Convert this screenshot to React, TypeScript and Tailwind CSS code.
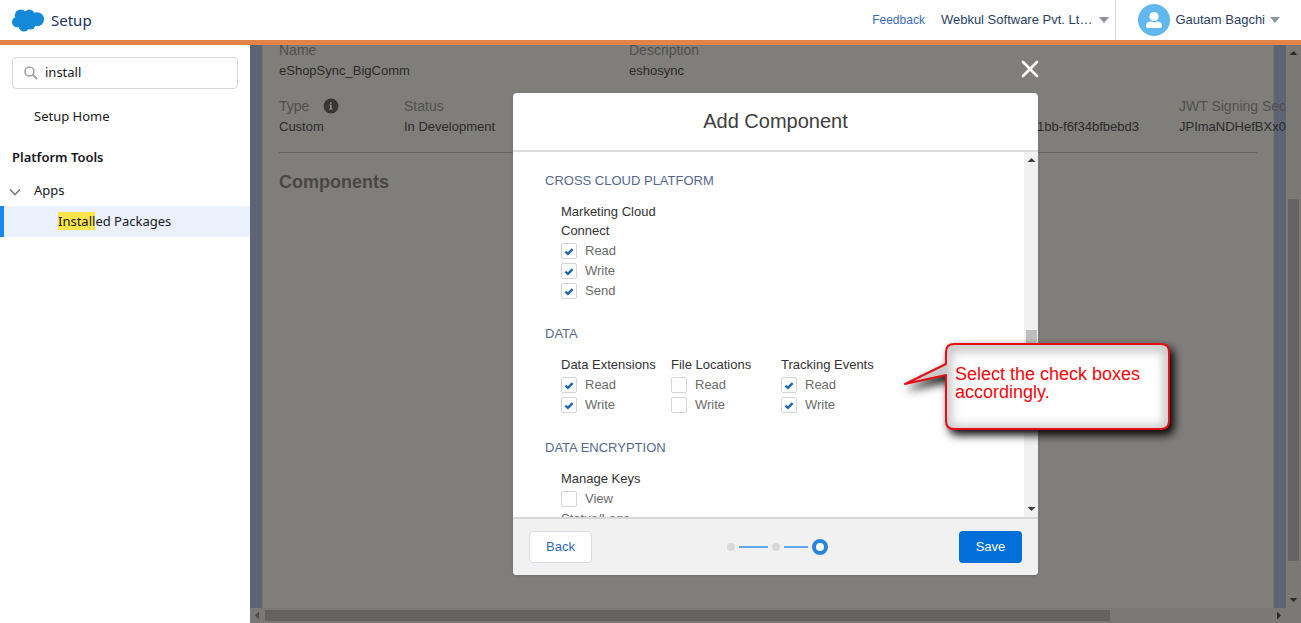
import React, { useState } from "react";

type Option = { label: string; checked: boolean };
type Group = { name: string; options: Option[] };
type Section = { title: string; groups: Group[] };

const sections: Section[] = [
  {
    title: "CROSS CLOUD PLATFORM",
    groups: [
      {
        name: "Marketing Cloud Connect",
        options: [
          { label: "Read", checked: true },
          { label: "Write", checked: true },
          { label: "Send", checked: true },
        ],
      },
    ],
  },
  {
    title: "DATA",
    groups: [
      {
        name: "Data Extensions",
        options: [
          { label: "Read", checked: true },
          { label: "Write", checked: true },
        ],
      },
      {
        name: "File Locations",
        options: [
          { label: "Read", checked: false },
          { label: "Write", checked: false },
        ],
      },
      {
        name: "Tracking Events",
        options: [
          { label: "Read", checked: true },
          { label: "Write", checked: true },
        ],
      },
    ],
  },
  {
    title: "DATA ENCRYPTION",
    groups: [
      {
        name: "Manage Keys",
        options: [{ label: "View Status/Logs", checked: false }],
      },
    ],
  },
];

const CloudLogo = () => (
  <svg width="32" height="24" viewBox="0 0 32 24" fill="#1589d9" aria-hidden="true">
    <circle cx="8.8" cy="7.6" r="6" />
    <circle cx="17.4" cy="6.800" r="5.2" />
    <circle cx="25" cy="11.2" r="7" />
    <circle cx="5.2" cy="14" r="5.2" />
    <circle cx="12" cy="18.2" r="5.4" />
    <circle cx="18.4" cy="16.6" r="5" />
    <path d="M8 6h12l6 6-6 6H8l-3-5z" />
  </svg>
);

const Caret = () => (
  <svg width="10" height="6" viewBox="0 0 10 6" fill="#8a94a3" aria-hidden="true">
    <path d="M0 0h10L5 6z" />
  </svg>
);

const Arrow = ({ d, color }: { d: string; color: string }) => (
  <svg width="15" height="15" viewBox="0 0 15 15" fill={color} className="shrink-0" aria-hidden="true">
    <path d={d} />
  </svg>
);

const UP = "M3.5 10h8l-4-4z";
const DOWN = "M3.5 5h8l-4 4z";
const LEFT = "M9 3.5v8l-4-4z";
const RIGHT = "M6 3.5v8l4-4z";

const Header = () => (
  <header className="flex h-[45px] shrink-0 items-stretch border-b-[5px] border-[#e2844a] bg-white text-[13px] text-[#2a3f5f]">
    <div className="flex flex-1 items-center gap-[7px] pl-3">
      <CloudLogo />
      <span className="font-['Noto_Sans',sans-serif] text-[15px] text-[#16325c]">Setup</span>
    </div>
    <div className="flex items-center gap-4 border-r border-[#d0d4da] pr-[6px]">
      <a href="#" className="text-[12px] text-[#3a6bb5]">Feedback</a>
      <button className="flex items-center gap-[7px]">
        Webkul Software Pvt. Lt…
        <Caret />
      </button>
    </div>
    <button className="flex items-center gap-[5px] pr-[21px] pl-[22px]">
      <svg width="32" height="32" viewBox="0 0 32 32" aria-hidden="true">
        <circle cx="16" cy="16" r="16" fill="#62b7ed" />
        <circle cx="16" cy="12.500" r="4.6" fill="#fff" />
        <path d="M8 21.500c0-2.800 2.400-4 5-4.100 1.800 1.100 4.200 1.100 6 0 2.600.1 5 1.300 5 4.100 0 1.500-.8 2.500-2 2.500H10c-1.200 0-2-1-2-2.500z" fill="#fff" />
      </svg>
      Gautam Bagchi
      <Caret />
    </button>
  </header>
);

const Sidebar = () => {
  const [query, setQuery] = useState("install");
  return (
    <aside className="w-[250px] shrink-0 bg-white pt-3 font-['Noto_Sans',sans-serif] text-[13px] text-[#16181c]">
      <label className="mx-3 flex h-8 items-center gap-[7px] rounded border border-[#d4d6da] px-[11px]">
        <svg width="14" height="14" viewBox="0 0 14 14" fill="none" stroke="#a3a3a3" className="shrink-0" aria-hidden="true">
          <circle cx="5.500" cy="5.500" r="4.500" strokeWidth="1.600" />
          <path d="M8.800 8.800l4.200 4.200" strokeWidth="2" />
        </svg>
        <input
          aria-label="Quick Find"
          value={query}
          onChange={(e) => setQuery(e.target.value)}
          className="w-full min-w-0 outline-none"
        />
      </label>
      <nav className="mt-3 leading-[31px]">
        <a href="#" className="block pl-[34px]">Setup Home</a>
        <h2 className="mt-[10px] mb-[2px] pl-3 font-semibold">Platform Tools</h2>
        <button className="flex w-full items-center gap-3 pl-2">
          <svg width="14" height="14" viewBox="0 0 14 14" fill="none" stroke="#6b7280" strokeWidth="1.500" aria-hidden="true">
            <path d="M2 5.500l5 5 5-5" />
          </svg>
          Apps
        </button>
        <a href="#" className="block border-l-4 border-[#1589ee] bg-[#ebf1fc] pl-[54px]">
          <mark className="bg-[#fbe54b] text-inherit">Install</mark>ed Packages
        </a>
      </nav>
    </aside>
  );
};

const Field = ({ label, value, className, icon }: { label: string; value: string; className: string; icon?: React.ReactNode }) => (
  <div className={className}>
    <dt className="flex h-[21px] items-center gap-[14px] text-sm text-[#504f4e]">
      {label}
      {icon}
    </dt>
    <dd className="text-[13px] leading-[22px] text-[#2b2a2a]">{value}</dd>
  </div>
);

const PackageDetails = () => (
  <div className="flex min-w-0 flex-1 flex-col">
    <div className="flex min-h-0 flex-1">
      <div className="flex min-w-0 flex-1 overflow-hidden bg-[#5d6473] px-3">
        <section className="-mt-5 min-w-0 flex-1 border-x border-[#777572] bg-[#807e7b] px-4 pt-[14px] whitespace-nowrap">
          <dl className="flex">
            <Field className="w-[350px] shrink-0" label="Name" value="eShopSync_BigComm" />
            <Field className="flex-1" label="Description" value="eshosync" />
          </dl>
          <dl className="mt-[13px] flex">
            <Field
              className="w-[125px] shrink-0"
              label="Type"
              value="Custom"
              icon={
                <svg width="16" height="16" viewBox="0 0 16 16" aria-hidden="true">
                  <circle cx="8" cy="8" r="7.500" fill="#383736" />
                  <path d="M7 4.200h1.700v1.500H7zM6.300 6.800h2.400v3.800h.8v1.100H6.300v-1.100H7V7.800h-.7z" fill="#8b8986" />
                </svg>
              }
            />
            <Field className="flex-1" label="Status" value="In Development" />
            <div className="w-[142px] shrink-0 pt-[21px] text-[13px] leading-[22px] text-[#2b2a2a]">1bb-f6f34bfbebd3</div>
            <Field className="w-[78px] shrink-0" label="JWT Signing Sec" value="JPImaNDHefBXx0" />
          </dl>
          <hr className="mt-[14px] border-[#666462]" />
          <h2 className="mt-[15px] text-lg font-bold text-[#484746]">Components</h2>
        </section>
      </div>
      <div className="flex w-[15px] shrink-0 flex-col bg-[#7b7976]">
        <Arrow d={UP} color="#2c2b2a" />
        <div className="flex flex-1 flex-col pt-[139px] pb-[32px]">
          <div className="mx-[2px] flex-1 bg-[#656361]" />
        </div>
        <Arrow d={DOWN} color="#2c2b2a" />
      </div>
    </div>
    <div className="flex h-[15px] shrink-0 bg-[#7b7976] pr-[15px]">
      <Arrow d={LEFT} color="#4d4b4a" />
      <div className="flex-1 py-[2px]">
        <div className="h-full w-[84%] bg-[#656361]" />
      </div>
      <Arrow d={RIGHT} color="#2c2b2a" />
    </div>
  </div>
);

const Checkbox = ({ label, checked }: Option) => (
  <label className="block leading-5 text-[#6b6b6b]">
    <span className="relative mr-2 inline-block size-4 align-[-4px]">
      <input
        type="checkbox"
        defaultChecked={checked}
        className="peer block size-4 appearance-none rounded-xs border border-[#d4d5d8] bg-white"
      />
      <svg
        viewBox="0 0 16 16"
        className="pointer-events-none absolute inset-0 hidden size-4 peer-checked:block"
        fill="none"
        stroke="#1b66b3"
        strokeWidth="2.400"
        aria-hidden="true"
      >
        <path d="M4.400 8.700l2.500 2.200 4.700-4.700" />
      </svg>
    </span>
    {label}
  </label>
);

// speech bubble with its tail on the left
const Callout = () => {
  const shape = "M50 1H257q8 0 8 8V78q0 8-8 8H50q-8 0-8-8V32L1 41 42 21V9q0-8 8-8z";
  return (
    <div className="absolute top-[250px] left-[391px] w-[268px]">
      <svg width="268" height="88" viewBox="0 0 268 88" className="block overflow-visible" aria-hidden="true">
        <defs>
          <clipPath id="bubble">
            <path d={shape} />
          </clipPath>
          <filter id="soft" x="-20%" y="-30%" width="140%" height="160%">
            <feGaussianBlur stdDeviation="5" />
          </filter>
        </defs>
        <path d={shape} transform="translate(4 5)" fill="#000" stroke="#000" strokeWidth="2" filter="url(#soft)" />
        <path d={shape} fill="#fff" />
        <g clipPath="url(#bubble)">
          <path d={shape} transform="translate(0 2)" fill="none" stroke="#000" strokeOpacity="0.22" strokeWidth="12" filter="url(#soft)" />
        </g>
        <path d={shape} fill="none" stroke="#e30f14" strokeWidth="2" strokeLinejoin="round" />
      </svg>
      <p className="absolute top-[22px] right-4 left-[51px] text-lg leading-[18px] text-[#f4060b]">
        Select the check boxes accordingly.
      </p>
    </div>
  );
};

const AddComponentModal = () => (
  <div className="absolute inset-0 flex justify-center py-12">
    <div role="dialog" aria-label="Add Component" className="relative flex w-[525px] flex-col rounded bg-white shadow">
      <button aria-label="Close" className="absolute -top-[33px] -right-px">
        <svg width="18" height="18" viewBox="0 0 18 18" stroke="#fff" strokeWidth="2.600" strokeLinecap="round" aria-hidden="true">
          <path d="M2 2l14 14M16 2L2 16" />
        </svg>
      </button>
      <h1 className="shrink-0 border-b-2 border-[#dcdcdc] text-center text-xl leading-[57px] text-[#3e3e3c]">
        Add Component
      </h1>
      <div className="flex min-h-0 flex-1">
        <div className="flex flex-1 flex-col gap-[23px] overflow-hidden px-8 pt-[19px] text-[13px]">
          {sections.map((section) => (
            <section key={section.title} className="shrink-0">
              <h2 className="leading-5 text-[#54698d]">{section.title}</h2>
              <div className="mt-[11px] flex pl-4">
                {section.groups.map((group) => (
                  <fieldset key={group.name} className="w-[110px] pr-2">
                    <legend className="pb-px leading-[19px] text-[#333]">{group.name}</legend>
                    {group.options.map((option) => (
                      <Checkbox key={option.label} {...option} />
                    ))}
                  </fieldset>
                ))}
              </div>
            </section>
          ))}
        </div>
        <div className="flex w-[14px] shrink-0 flex-col items-center bg-[#f1f1f1]">
          <Arrow d={UP} color="#404040" />
          <div className="w-[11px] flex-1 pt-[163px]">
            <div className="h-[30px] bg-[#bdbdbd]" />
          </div>
          <Arrow d={DOWN} color="#404040" />
        </div>
      </div>
      <footer className="flex shrink-0 items-center justify-between rounded-b border-t-2 border-[#d8d8d8] bg-[#f1f1f1] px-4 py-3 text-[13px]">
        <button className="h-8 w-[63px] rounded border border-[#d8dde6] bg-white text-[#2f6bb5]">Back</button>
        <div className="flex items-center gap-1 pl-1">
          <span className="size-2 rounded-full bg-[#d9d9d9]" />
          <span className="h-[2px] w-[29px] bg-[#5eaaf0]" />
          <span className="size-2 rounded-full bg-[#d9d9d9]" />
          <span className="h-[2px] w-6 bg-[#5eaaf0]" />
          <span className="size-4 rounded-full border-4 border-[#2b83dc] bg-white" />
        </div>
        <button className="h-8 w-[63px] rounded bg-[#0070d8] text-white">Save</button>
      </footer>
      <Callout />
    </div>
  </div>
);

const App = () => {
  return (
    <div className="flex h-screen flex-col overflow-hidden font-['Liberation_Sans',Arial,sans-serif]">
      <Header />
      <div className="flex min-h-0 flex-1">
        <Sidebar />
        <main className="relative flex min-w-0 flex-1">
          <PackageDetails />
          <AddComponentModal />
        </main>
      </div>
    </div>
  );
};

export default App;
